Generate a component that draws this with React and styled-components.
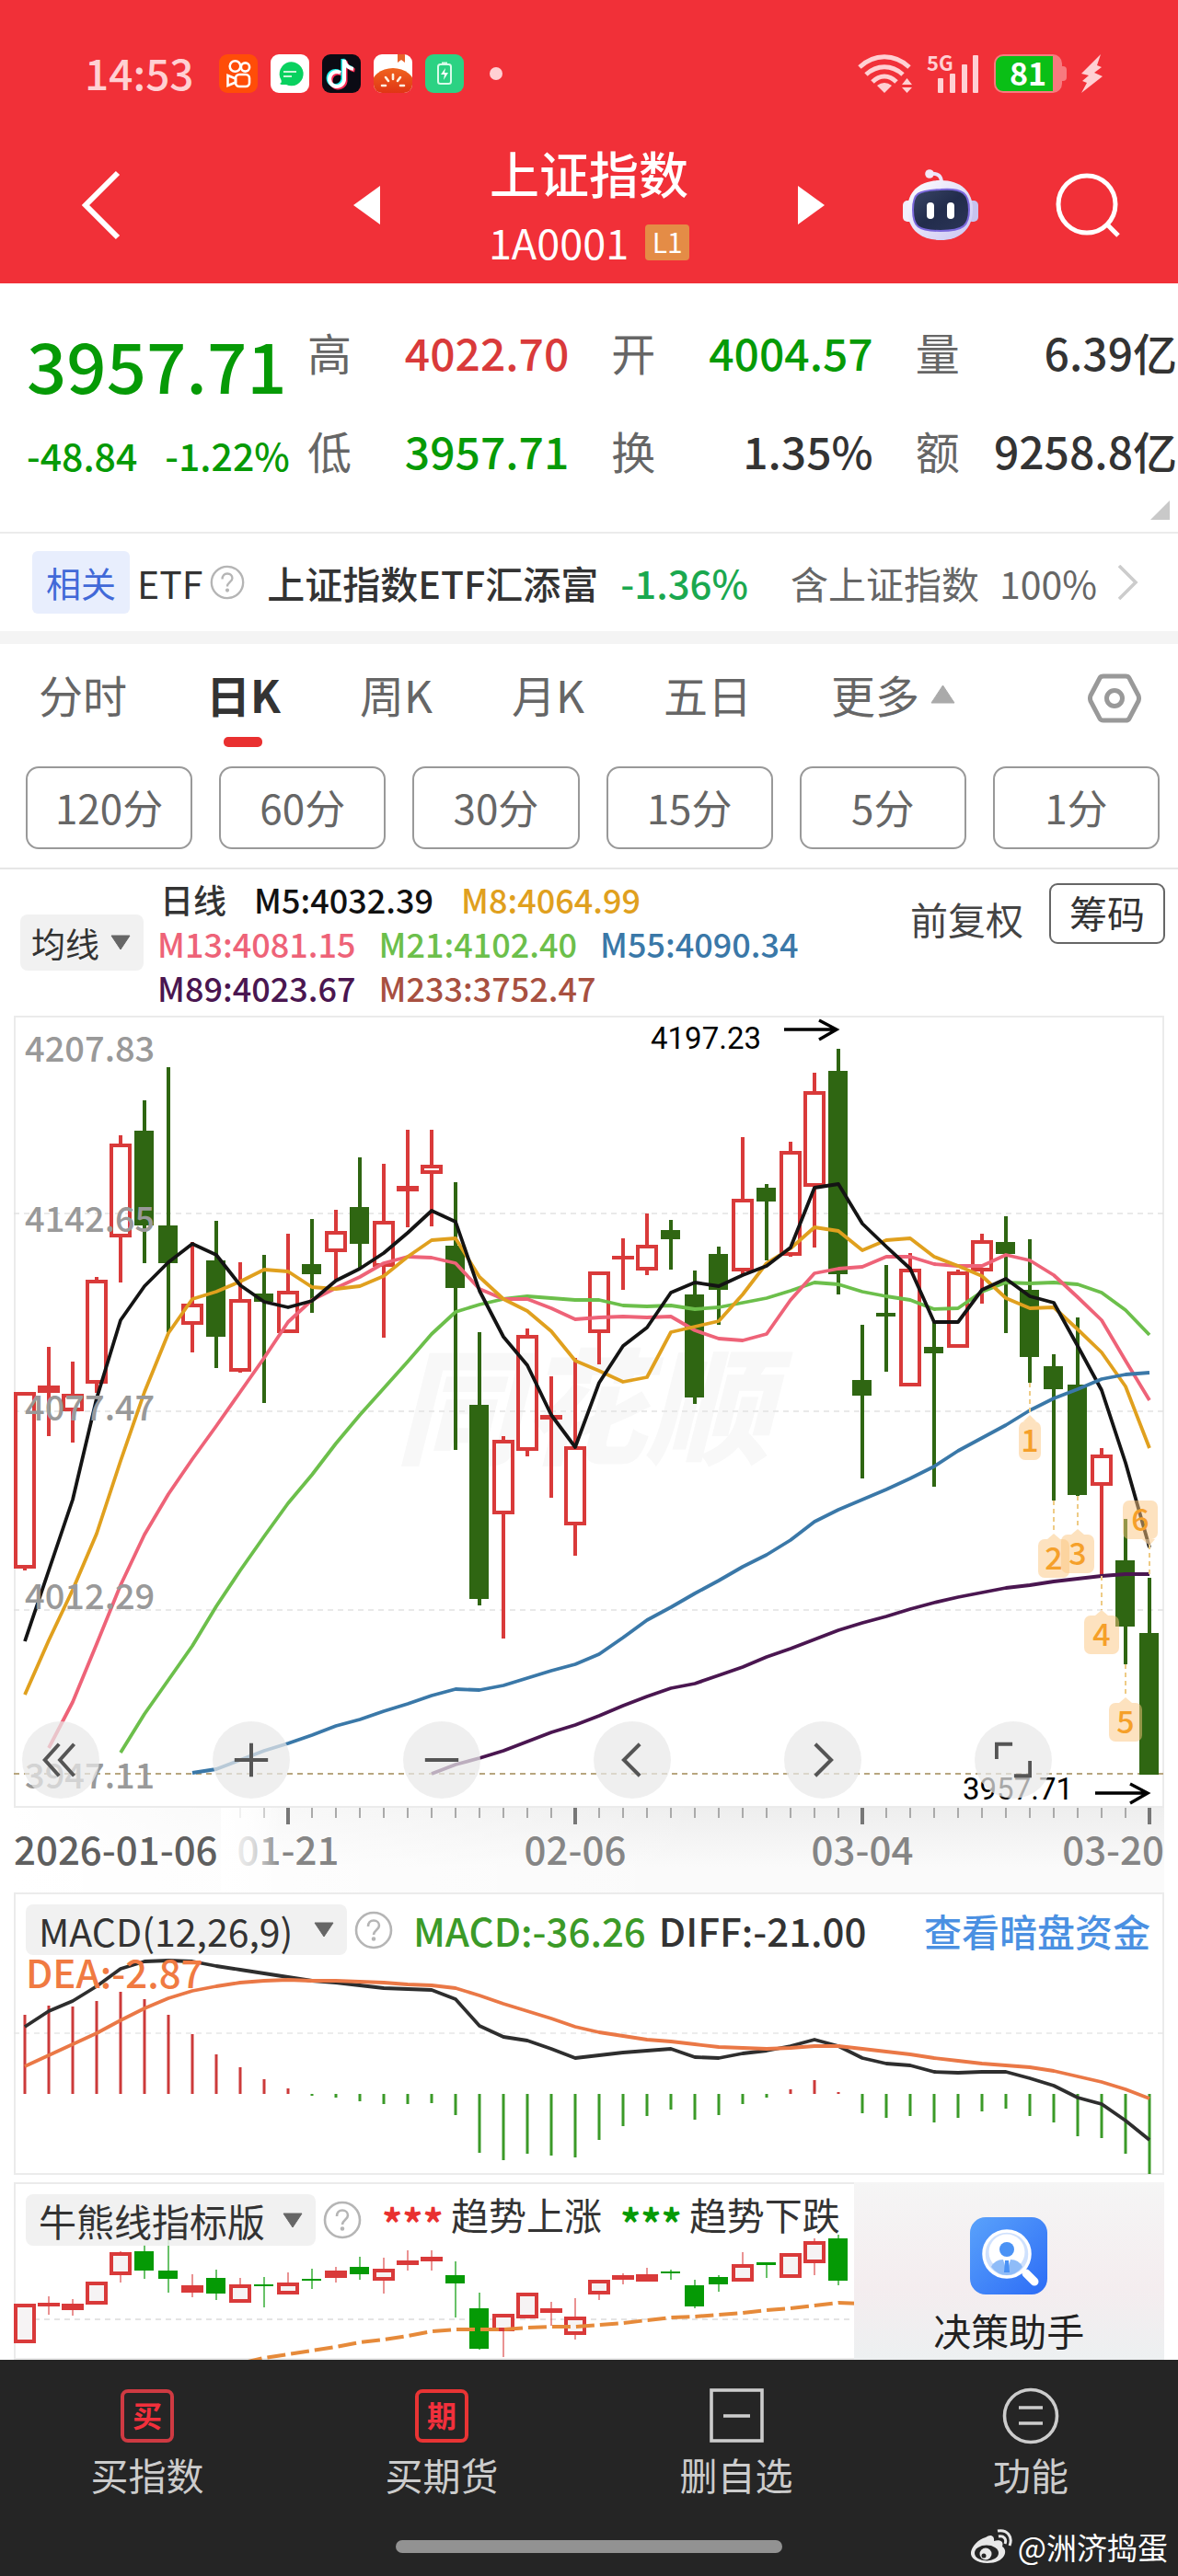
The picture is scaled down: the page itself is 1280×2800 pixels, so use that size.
import React from "react";
import styled, { createGlobalStyle } from "styled-components";

const FONT = '"Noto Sans CJK SC", "Noto Sans", sans-serif';
const RED = "#f13038";
const UP = "#d93a3a";
const GREEN = "#069a06";

const GlobalStyle = createGlobalStyle`
  * { box-sizing: border-box; }
  body { margin: 0; background: #fff; color: #333; font-family: ${FONT}; }
  button, select { margin: 0; padding: 0; border: 0; background: none; color: inherit; font: inherit; cursor: pointer; }
  a { color: inherit; text-decoration: none; }
  svg { display: block; }
  svg text { font-family: ${FONT}; }
  h1, h2, p, dl, dd, dt { margin: 0; font-weight: inherit; font-size: inherit; }
`;

/* ---------- header ---------- */
const Header = styled.header`
  background: ${RED};
  color: #fff;
  padding-bottom: 14px;
`;
const StatusBar = styled.div`
  display: flex;
  align-items: center;
  padding: 56px 82px 0 92px;
  color: #ffd0d3;
  font-size: 46px;
  font-weight: 500;
  line-height: 48px;
`;
const Clock = styled.span`
  padding-bottom: 4px;
  line-height: 44px;
`;
const AppIcons = styled.div`
  display: flex;
  align-items: center;
  gap: 14px;
  margin-left: 27px;
`;
const MoreDot = styled.span`
  width: 14px;
  height: 14px;
  margin-left: 14px;
  border-radius: 50%;
  background: #ffd0d3;
`;
const StatusRight = styled.div`
  display: flex;
  align-items: center;
  gap: 15px;
  margin-left: auto;
`;
const Network = styled.div`
  display: grid;
  grid-template-columns: 58px;
  & > * { grid-area: 1 / 1; }
`;
const NetworkLabel = styled.span`
  align-self: start;
  font-size: 22px;
  font-weight: 700;
  line-height: 16px;
`;
const Battery = styled.div`
  display: flex;
  align-items: center;
  &::after {
    content: "";
    width: 5px;
    height: 16px;
    border-radius: 0 4px 4px 0;
    background: #f77a7f;
  }
`;
const BatteryBody = styled.div`
  width: 74px;
  height: 42px;
  border: 2px solid #f77a7f;
  border-radius: 10px;
  background: linear-gradient(90deg, #0abf16 0 62px, #f77a7f 62px);
  color: #fff;
  font-size: 34px;
  font-weight: 700;
  line-height: 35px;
  text-align: center;
`;
const NavBar = styled.nav`
  display: grid;
  grid-template-columns: 1fr 454px 1fr;
  align-items: center;
  padding-top: 48px;
`;
const NavSide = styled.div`
  display: flex;
  align-items: center;
  justify-content: space-between;
  padding-left: ${(p) => (p.$start ? 88 : 0)}px;
  padding-right: ${(p) => (p.$start ? 0 : 62)}px;
`;
const TitleBlock = styled.div`
  text-align: center;
`;
const Title = styled.h1`
  font-size: 54px;
  font-weight: 500;
  line-height: 72px;
`;
const CodeRow = styled.p`
  display: flex;
  align-items: center;
  justify-content: center;
  gap: 18px;
  margin-top: 8px;
  font-size: 45px;
  line-height: 62px;
`;
const LevelBadge = styled.span`
  width: 48px;
  height: 39px;
  border-radius: 4px;
  background: #e48c46;
  font-size: 30px;
  line-height: 36px;
  text-align: center;
`;

/* ---------- quote ---------- */
const Quote = styled.section`
  position: relative;
  display: grid;
  grid-template-columns: 260px minmax(0, 1fr);
  gap: 45px;
  padding: 44px 1px 59px 29px;
  border-bottom: 2px solid #ebebeb;
`;
const LastPrice = styled.p`
  color: ${GREEN};
  font-size: 76px;
  font-weight: 500;
  line-height: 86px;
`;
const Change = styled.p`
  display: flex;
  gap: 30px;
  margin-top: 36px;
  color: ${GREEN};
  font-size: 41px;
  font-weight: 500;
  line-height: 40px;
  white-space: nowrap;
`;
const Stats = styled.dl`
  display: grid;
  grid-template-columns: repeat(3, 1fr);
  gap: 47px 46px;
`;
const Stat = styled.div`
  display: flex;
  justify-content: space-between;
  font-size: 48px;
  line-height: 60px;
  white-space: nowrap;
  dt { color: #666; }
  dd { color: ${(p) => p.$color || "#333"}; font-weight: 500; }
`;
const Corner = styled.svg`
  position: absolute;
  right: 9px;
  bottom: 13px;
`;

/* ---------- ETF row ---------- */
const EtfRow = styled.section`
  display: flex;
  align-items: center;
  justify-content: space-between;
  padding: 19px 43px 19px 35px;
  border-bottom: 14px solid #f4f4f4;
  font-size: 41px;
  line-height: 68px;
  white-space: nowrap;
`;
const EtfGroup = styled.div`
  display: flex;
  align-items: center;
  gap: ${(p) => p.$gap}px;
  color: ${(p) => p.$color || "inherit"};
`;
const Tag = styled.span`
  padding: 0 15px;
  border-radius: 6px;
  background: #e8eefd;
  color: #4169d8;
  font-size: 38px;
`;
const EtfName = styled.a`
  font-weight: 500;
`;
const EtfPct = styled.span`
  color: #1ba84f;
  font-size: 42px;
  font-weight: 500;
`;

/* ---------- period tabs ---------- */
const Periods = styled.section`
  border-bottom: 2px solid #e6e6e6;
  padding-bottom: 20px;
`;
const TabRow = styled.div`
  display: flex;
  gap: 86px;
  padding: 0 40px 0 42px;
`;
const Tab = styled.button`
  position: relative;
  display: flex;
  align-items: center;
  gap: 12px;
  height: 133px;
  padding: 24px 0 49px;
  color: ${(p) => (p.$active ? "#333" : "#666")};
  font-size: 48px;
  font-weight: ${(p) => (p.$active ? 700 : 400)};
  line-height: 60px;
  &::after {
    content: "";
    display: ${(p) => (p.$active ? "block" : "none")};
    position: absolute;
    left: 50%;
    bottom: 21px;
    width: 42px;
    height: 11px;
    margin-left: -21px;
    border-radius: 5px;
    background: #e93030;
  }
`;
const SettingsButton = styled.button`
  height: 117px;
  margin-left: auto;
`;
const MinuteRow = styled.div`
  display: grid;
  grid-template-columns: repeat(6, 1fr);
  gap: 29px;
  padding: 0 20px 0 28px;
`;
const MinuteButton = styled.button`
  height: 90px;
  border: 2px solid #999;
  border-radius: 14px;
  color: #666;
  font-size: 44px;
  line-height: 60px;
  padding-bottom: 2px;
`;

/* ---------- moving average legend ---------- */
const MaBar = styled.section`
  display: flex;
  align-items: flex-start;
  padding: 8px 14px 7px 22px;
`;
const SelectBox = styled.label`
  position: relative;
  display: flex;
  align-items: center;
  height: ${(p) => p.$height}px;
  margin-top: ${(p) => p.$top || 0}px;
  border-radius: 8px;
  background: rgba(238, 238, 238, 0.85);
  svg { position: absolute; right: 14px; pointer-events: none; }
  select {
    appearance: none;
    padding: 0 ${(p) => p.$right}px 0 ${(p) => p.$left}px;
    color: #333;
    font-size: ${(p) => p.$size}px;
    line-height: 52px;
  }
`;
const MaLines = styled.div`
  margin-left: 15px;
`;
const MaLine = styled.p`
  display: flex;
  gap: ${(p) => p.$gap}px;
  padding-left: ${(p) => p.$left || 0}px;
  font-size: 36px;
  font-weight: 500;
  line-height: 48px;
  white-space: nowrap;
`;
const MaItem = styled.span`
  color: ${(p) => p.$color};
`;
const AdjustButton = styled.button`
  height: 76px;
  margin: 7px 28px 0 auto;
  color: #444;
  font-size: 41px;
`;
const ChipButton = styled.button`
  height: 66px;
  margin-top: 7px;
  padding: 0 20px 4px;
  border: 2px solid #666;
  border-radius: 9px;
  font-size: 41px;
  line-height: 56px;
`;

/* ---------- charts ---------- */
const Panel = styled.section`
  display: grid;
  grid-template-columns: minmax(0, 1fr);
  position: relative;
  margin: 0 15px ${(p) => p.$gap || 0}px;
  box-shadow: inset 0 0 0 2px #ebebeb;
  overflow: hidden;
  & > * { grid-area: 1 / 1; }
`;
const ChartSvg = styled.svg`
  width: 100%;
  height: auto;
`;
const ExtremeLabel = styled.text`
  && { font-family: Roboto, "Liberation Sans", sans-serif; }
  font-size: 33px;
  fill: #000;
`;
const AxisStrip = styled.div`
  margin: 0 15px;
  background:
    linear-gradient(90deg, #fff, rgba(255, 255, 255, 0) 60%),
    linear-gradient(180deg, #eeeeee, #fafafa 70%);
`;
const Controls = styled.div`
  position: absolute;
  left: 9px;
  right: 122px;
  bottom: 10px;
  display: flex;
  justify-content: space-between;
`;
const RoundButton = styled.button`
  display: grid;
  place-items: center;
  width: 84px;
  height: 84px;
  border-radius: 50%;
  background: rgba(233, 233, 233, 0.72);
`;
const IndicatorHead = styled.div`
  z-index: 1;
  align-self: start;
  padding: 13px 15px 0 13px;
  font-size: 42px;
`;
const IndicatorRow = styled.div`
  display: flex;
  align-items: ${(p) => (p.$top ? "flex-start" : "center")};
  white-space: nowrap;
  line-height: 54px;
`;
const HelpButton = styled.button`
  margin: ${(p) => (p.$top ? 7 : 0)}px 22px 0 ${(p) => p.$left}px;
`;
const Reading = styled.span`
  margin-right: 14px;
  color: ${(p) => p.$color};
  font-weight: 500;
`;
const DeaReading = styled.p`
  color: #f07a42;
  font-weight: 500;
  line-height: 36px;
`;
const DarkPoolLink = styled.a`
  margin-left: auto;
  color: #4a90e2;
  font-size: 41px;
  font-weight: 500;
`;
const Trend = styled.span`
  margin-right: 20px;
  font-size: 41px;
  line-height: 42px;
`;
const Stars = styled.span`
  margin-right: 8px;
  color: ${(p) => p.$color};
  font-size: 44px;
  font-weight: 700;
  line-height: 60px;
`;
const Assistant = styled.button`
  z-index: 2;
  justify-self: end;
  display: flex;
  flex-direction: column;
  align-items: center;
  gap: 12px;
  width: 27%;
  padding-top: 38px;
  background: linear-gradient(180deg, #f5f5f5, #f4edef 60%, #edf0f1);
  color: #222;
  font-size: 41px;
  line-height: 52px;
`;

/* ---------- bottom bar ---------- */
const BottomBar = styled.footer`
  background: #252525;
  color: #ccc;
`;
const Actions = styled.nav`
  display: grid;
  grid-template-columns: repeat(4, 1fr);
  padding-top: 30px;
`;
const Action = styled.button`
  display: flex;
  flex-direction: column;
  align-items: center;
  gap: 9px;
  font-size: 41px;
  line-height: 46px;
`;
const GlyphBox = styled.span`
  width: 58px;
  height: 58px;
  margin: 2px;
  border: 4px solid ${(p) => p.$color};
  border-radius: 8px;
  color: #f2303c;
  font-size: 32px;
  font-weight: 700;
  line-height: 46px;
`;
const Footer = styled.div`
  display: grid;
  grid-template-columns: 1fr 420px 1fr;
  align-items: center;
  height: 88px;
  padding-top: 24px;
`;
const HomeBar = styled.span`
  grid-column: 2;
  height: 14px;
  border-radius: 7px;
  background: #929292;
`;
const Credit = styled.span`
  display: flex;
  align-items: center;
  justify-self: end;
  gap: 6px;
  padding-right: 11px;
  color: #fff;
  font-size: 33px;
  line-height: 44px;
  white-space: nowrap;
`;

/* ---------- data: pixel heights from the top of each panel ---------- */
const STEP = 26;
const X0 = 12;
const xAt = (i) => X0 + i * STEP;

// [rising, high, body top, body bottom, low]
const candles = [
  [1, 409, 409, 601, 603], [1, 360, 402, 410, 457], [1, 376, 411, 430, 464], [1, 284, 287, 400, 410],
  [1, 130, 139, 241, 290], [0, 92, 125, 228, 269], [0, 56, 228, 269, 344], [1, 246, 313, 336, 366],
  [0, 223, 266, 349, 383], [1, 268, 308, 387, 388], [0, 260, 302, 311, 421], [1, 237, 299, 345, 345],
  [0, 221, 270, 281, 323], [1, 211, 234, 257, 288], [0, 154, 208, 248, 275], [1, 161, 223, 273, 350],
  [1, 124, 185, 191, 230], [1, 124, 162, 172, 229], [0, 181, 250, 296, 472], [0, 344, 423, 634, 641],
  [1, 457, 461, 542, 677], [1, 340, 347, 473, 479], [1, 392, 434, 439, 524], [1, 372, 468, 554, 587],
  [1, 278, 278, 345, 379], [1, 242, 261, 265, 298], [1, 215, 249, 277, 282], [0, 222, 233, 243, 276],
  [0, 277, 303, 415, 422], [0, 251, 259, 298, 336], [1, 132, 199, 278, 281], [0, 183, 187, 202, 266],
  [1, 137, 147, 261, 262], [1, 62, 82, 186, 252], [0, 36, 60, 281, 303], [0, 336, 396, 413, 503],
  [0, 271, 323, 327, 387], [1, 258, 275, 403, 403], [0, 333, 360, 367, 512], [1, 276, 278, 361, 361],
  [1, 237, 244, 278, 313], [0, 218, 246, 259, 345], [0, 243, 298, 371, 399], [0, 368, 381, 406, 527],
  [0, 328, 401, 521, 522], [1, 470, 477, 511, 609], [0, 547, 592, 664, 705], [0, 611, 671, 825, 825],
];
const averages = [
  { color: "#6cbf4b", from: 4, y: [801, 759, 722, 685, 642, 603, 566, 530, 499, 465, 434, 405, 376, 346, 322, 314, 308, 305, 307, 309, 309, 315, 316, 315, 319, 317, 312, 307, 299, 290, 292, 300, 305, 309, 319, 318, 300, 290, 291, 290, 292, 301, 320, 347] },
  { color: "#ee6378", from: 1, y: [796, 746, 683, 619, 564, 520, 482, 446, 409, 372, 333, 309, 296, 284, 269, 262, 263, 269, 297, 308, 308, 318, 330, 328, 327, 328, 327, 342, 351, 353, 346, 309, 280, 275, 273, 262, 262, 270, 272, 272, 260, 266, 282, 306, 331, 375, 418] },
  { color: "#e0a01e", from: 0, y: [738, 679, 624, 563, 484, 409, 345, 308, 300, 289, 276, 278, 295, 297, 294, 283, 262, 244, 242, 284, 308, 321, 343, 375, 386, 398, 393, 344, 338, 332, 303, 269, 253, 230, 234, 255, 244, 242, 262, 272, 283, 307, 318, 317, 341, 366, 403, 470] },
  { color: "#141414", from: 0, y: [680, 603, 526, 416, 331, 294, 268, 248, 260, 293, 311, 317, 310, 288, 275, 258, 236, 212, 224, 299, 349, 380, 434, 469, 399, 359, 339, 301, 290, 294, 282, 272, 252, 187, 183, 226, 251, 275, 333, 333, 298, 286, 305, 312, 359, 407, 486, 578] },
  { color: "#3a78a8", from: 7, y: [823, 819, 809, 799, 791, 782, 772, 765, 756, 748, 739, 732, 733, 728, 720, 712, 705, 694, 676, 657, 643, 628, 614, 599, 586, 570, 550, 537, 526, 515, 503, 490, 473, 459, 445, 429, 416, 406, 395, 390, 388] },
  { color: "#4a1650", from: 17, y: [824, 814, 807, 799, 789, 779, 771, 761, 750, 740, 731, 726, 717, 708, 697, 688, 678, 668, 660, 653, 645, 638, 632, 627, 622, 619, 615, 612, 609, 607, 607] },
];
const scale = [["4207.83", 50], ["4142.65", 235], ["4077.47", 440], ["4012.29", 645], ["3947.11", 840]];
// [digit, box left, box top, box width, pointer x, dash from, dash to]
const marks = [
  ["1", 1092, 441, 24, 1104, 399, 434], ["2", 1113, 569, 34, 1130, 527, 563], ["3", 1138, 564, 36, 1156, 522, 558],
  ["4", 1163, 652, 38, 1182, 609, 646], ["5", 1190, 747, 36, 1208, 705, 741],
];
const macdBars = [133, 123, 124, 118, 108, 116, 133, 154, 176, 190, 203, 213, 221, 223, 227, 230, 230, 229, 242, 283, 291, 284, 286, 288, 269, 254, 243, 236, 247, 242, 230, 223, 214, 204, 217, 240, 245, 243, 250, 245, 238, 235, 243, 250, 265, 267, 284, 306];
const diffLine = [146, 129, 118, 102, 83, 75, 74, 75, 80, 84, 88, 92, 96, 98, 101, 104, 105, 106, 116, 145, 157, 161, 170, 180, 177, 174, 172, 170, 179, 180, 175, 172, 167, 160, 167, 180, 186, 188, 195, 196, 195, 195, 202, 210, 223, 230, 248, 269];
const deaLine = [189, 177, 165, 153, 139, 126, 115, 107, 102, 98, 96, 95, 96, 96, 97, 98, 100, 101, 104, 112, 121, 129, 137, 146, 152, 156, 160, 162, 165, 168, 169, 170, 169, 167, 167, 170, 173, 176, 180, 183, 186, 188, 190, 194, 200, 206, 214, 224];
const trendCandles = [
  [1, 132, 132, 175, 175], [1, 124, 131, 135, 144], [1, 127, 132, 139, 145], [1, 108, 108, 133, 133], [1, 75, 76, 101, 109],
  [0, 68, 75, 96, 105], [0, 60, 96, 105, 120], [1, 100, 112, 120, 125], [0, 95, 104, 121, 128], [1, 104, 111, 131, 131],
  [0, 103, 111, 113, 136], [1, 98, 109, 122, 122], [0, 94, 105, 107, 116], [1, 92, 96, 104, 109], [0, 81, 92, 100, 106],
  [1, 82, 94, 107, 121], [1, 74, 85, 90, 96], [1, 74, 81, 86, 96], [0, 86, 101, 110, 147], [0, 120, 137, 181, 182],
  [1, 143, 143, 162, 190], [1, 120, 120, 148, 148], [1, 130, 137, 142, 156], [1, 126, 146, 166, 171], [1, 106, 106, 122, 128],
  [1, 99, 101, 106, 111], [1, 93, 100, 108, 108], [0, 95, 97, 99, 106], [0, 106, 112, 135, 137], [0, 101, 103, 111, 119],
  [1, 76, 89, 108, 108], [0, 87, 87, 90, 104], [1, 77, 77, 104, 104], [1, 61, 64, 88, 101], [0, 57, 61, 107, 112],
];
const trendLine = [191, 187, 183, 179, 174, 171, 167, 162, 160, 160, 160, 158, 157, 157, 155, 153, 150, 147, 146, 144, 142, 139, 137, 134, 131, 132];

const points = (ys, from = 0) => ys.map((y, i) => `${xAt(i + from)},${y}`).join(" ");

function Candle({ i, data, up = UP, down = "#2f6612", fill = "none", wick = 4 }) {
  const [rising, high, top, bottom, low] = data;
  const x = xAt(i);
  if (!rising) {
    return (
      <g fill={down}>
        <rect x={x - wick / 2} y={high} width={wick} height={low - high} opacity={wick < 4 ? 0.6 : 1} />
        <rect x={x - 11} y={top} width="21" height={bottom - top} />
      </g>
    );
  }
  const h = bottom - top;
  return (
    <g>
      <g fill={up} opacity={wick < 4 ? 0.55 : 1}>
        <rect x={x - wick / 2} y={high} width={wick} height={top - high} />
        <rect x={x - wick / 2} y={bottom} width={wick} height={low - bottom} />
      </g>
      {h <= 8 ? (
        <rect x={x - 12} y={top} width="24" height={h} fill={up} />
      ) : (
        <rect x={x - 10} y={top + 2} width="20" height={h - 4} fill={fill} stroke={up} strokeWidth="4" />
      )}
    </g>
  );
}

function MainChart() {
  return (
    <ChartSvg viewBox="0 0 1250 861" role="img" aria-label="上证指数日K线">
      <text x="415" y="440" fontSize="136" fontWeight="900" fontStyle="italic" fill="#f8f8f8" dominantBaseline="middle">同花顺</text>
      <g stroke="#e2e2e2" strokeWidth="1.5" strokeDasharray="6 5">
        <path d="M0 215H1250M0 430H1250M0 646H1250" />
      </g>
      <path d="M0 824H1250" stroke="#b8a67f" strokeWidth="2" strokeDasharray="6 5" />
      {candles.map((c, i) => <Candle key={i} i={i} data={c} />)}
      {averages.map((a) => (
        <polyline key={a.color} points={points(a.y, a.from)} fill="none" stroke={a.color} strokeWidth="3.8" strokeLinejoin="round" />
      ))}
      {marks.map(([d, x, y, w, px, from, to]) => (
        <g key={d}>
          <path d={`M${px} ${from}V${to}`} stroke="#eecb85" strokeWidth="2" strokeDasharray="5 4" />
          <path d={`M${px - 7} ${y}L${px} ${to}L${px + 7} ${y}Z`} fill="#fcd6a3" opacity="0.7" />
          <rect x={x} y={y} width={w} height="42" rx="7" fill="#fbc680" opacity="0.5" />
          <text x={px} y={y + 33} fontSize="34" fontWeight="500" fill="#f5a02a" textAnchor="middle">{d}</text>
        </g>
      ))}
      <g>
        <path d="M1234 575V611" stroke="#eecb85" strokeWidth="2" strokeDasharray="5 4" />
        <path d="M1226 569L1234 576L1240 569Z" fill="#fcd6a3" opacity="0.7" />
        <rect x="1205" y="527" width="38" height="42" rx="7" fill="#fbc680" opacity="0.5" />
        <text x="1224" y="560" fontSize="34" fontWeight="500" fill="#f5a02a" textAnchor="middle">6</text>
      </g>
      <g fontSize="38" fontWeight="500" fill="#999">
        {scale.map(([t, y]) => <text key={t} x="12" y={y}>{t}</text>)}
      </g>
      <ExtremeLabel x="692" y="36">4197.23</ExtremeLabel>
      <ExtremeLabel x="1031" y="852">3957.71</ExtremeLabel>
      <path d="M837 15H894M875 5L894 15L875 26M1175 845H1232M1213 835L1232 845L1213 856" fill="none" stroke="#000" strokeWidth="3.4" />
    </ChartSvg>
  );
}

function DateAxis() {
  return (
    <ChartSvg viewBox="0 0 1250 92" role="img" aria-label="日期">
      <defs>
        <linearGradient id="fade">
          <stop offset="0" stopColor="#fff" />
          <stop offset="0.55" stopColor="#fff" stopOpacity="0.7" />
          <stop offset="1" stopColor="#fff" stopOpacity="0" />
        </linearGradient>
      </defs>
      {Array.from({ length: 39 }, (_, k) => k + 9).map((i) => {
        const major = (i - 11) % 12 === 0;
        return <rect key={i} x={xAt(i) - (major ? 2 : 1)} y="0" width={major ? 4 : 2} height={major ? 18 : 11} fill={major ? "#777" : "#aaa"} />;
      })}
      <g fontSize="42" fontWeight="500" fill="#858585" textAnchor="middle">
        <text x="298" y="62">01-21</text>
        <text x="610" y="62">02-06</text>
        <text x="922" y="62">03-04</text>
        <text x="1250" y="62" textAnchor="end">03-20</text>
      </g>
      <rect x="225" width="65" height="92" fill="url(#fade)" />
      <text x="0" y="62" fontSize="42" fontWeight="500" fill="#5f5f5f">2026-01-06</text>
    </ChartSvg>
  );
}

function MacdChart() {
  return (
    <ChartSvg viewBox="0 0 1250 307" role="img" aria-label="MACD">
      <path d="M0 153H1250" stroke="#e6e6e6" strokeWidth="1.5" strokeDasharray="6 5" />
      {macdBars.map((y, i) => (
        <rect key={i} x={xAt(i) - 1.5} y={Math.min(y, 219)} width="3" height={Math.abs(219 - y)} fill={y < 219 ? "#cc3a3a" : "#3b9a28"} />
      ))}
      <g fill="none" strokeWidth="3.8" strokeLinejoin="round">
        <polyline points={points(diffLine)} stroke="#2e2e2e" />
        <polyline points={points(deaLine)} stroke="#ea7846" />
      </g>
    </ChartSvg>
  );
}

function TrendChart() {
  return (
    <ChartSvg viewBox="0 0 1250 193" role="img" aria-label="牛熊线">
      <path d="M0 149H1250" stroke="#dcdcdc" strokeWidth="1.5" strokeDasharray="6 5" />
      {trendCandles.map((c, i) => <Candle key={i} i={i} data={c} down="#059a05" fill="#f6f3f4" wick={2} />)}
      <polyline points={`250,196 ${points(trendLine, 10)}`} fill="none" stroke="#e68a3a" strokeWidth="4" strokeDasharray="20 6" />
    </ChartSvg>
  );
}

/* ---------- small drawings ---------- */
const Down = () => (
  <svg width="22" height="17" viewBox="0 0 22 17"><path d="M1 1H21L11 16Z" fill="#666" stroke="#666" strokeLinejoin="round" /></svg>
);
const Help = ({ size }) => (
  <svg width={size} height={size} viewBox="0 0 42 42" fill="none" stroke="#b5b5b5" strokeWidth="2.6">
    <circle cx="21" cy="21" r="19" />
    <path d="M15 17c0-4 2.500-6.500 6-6.500s6 2.500 6 5.500c0 4.500-6 5-6 10" />
    <circle cx="21" cy="30.500" r="1" fill="#b5b5b5" />
  </svg>
);
const Line = ({ d, size = 44 }) => (
  <svg width={size} height={size} viewBox="0 0 44 44" fill="none" stroke="#555" strokeWidth="4.4"><path d={d} /></svg>
);
const NavTriangle = ({ d }) => (
  <svg width="29" height="42" viewBox="0 0 29 42"><path d={d} fill="#fff" /></svg>
);

function AppGlyphs() {
  const common = { width: 42, height: 42, viewBox: "0 0 42 42" };
  return (
    <AppIcons>
      <svg {...common} fill="none" stroke="#fff" strokeWidth="2.600">
        <rect width="42" height="42" rx="9" fill="#ff4d08" stroke="none" />
        <circle cx="17.500" cy="13" r="5.800" /><circle cx="28.500" cy="14" r="4.600" />
        <rect x="18" y="22" width="15" height="13" rx="4" /><path d="M18 26.500L9.500 23V34L18 30.500Z" />
      </svg>
      <svg {...common}>
        <rect width="42" height="42" rx="9" fill="#fff" />
        <path d="M10 32c2-1 2-2 1.500-4A13 13 0 1 1 17 33c-3 0-5 .5-7-1Z" fill="#08d15f" />
        <path d="M14 19H28M14 24H23" stroke="#c8f5d8" strokeWidth="2" />
      </svg>
      <svg {...common} fill="none" strokeWidth="4">
        <rect width="42" height="42" rx="9" fill="#0b0b14" />
        <path d="M20 20a8 8 0 1 0 4 8V6c1 6 5 9 10 10" stroke="#fe2c55" transform="translate(1.500 1.500)" />
        <path d="M20 20a8 8 0 1 0 4 8V6c1 6 5 9 10 10" stroke="#25f4ee" transform="translate(-1.500 -1)" />
        <path d="M20 20a8 8 0 1 0 4 8V6c1 6 5 9 10 10" stroke="#fff" />
      </svg>
      <svg {...common}>
        <defs>
          <clipPath id="tile"><rect width="42" height="42" rx="9" /></clipPath>
          <linearGradient id="tomato" x2="0" y2="1"><stop stopColor="#f0641e" /><stop offset="1" stopColor="#d81e10" /></linearGradient>
        </defs>
        <g clipPath="url(#tile)">
          <rect width="42" height="42" fill="#fff" />
          <path d="M26 0h8v9l-4-3-4 3Z" fill="#e8622a" />
          <ellipse cx="21" cy="35" rx="24" ry="20" fill="url(#tomato)" />
          <path d="M21 22v5M13 25l3 4M29 25l-3 4M9 34h4M33 34h-4" stroke="#fff3e0" strokeWidth="2.600" strokeLinecap="round" />
        </g>
      </svg>
      <svg {...common}>
        <rect width="42" height="42" rx="9" fill="#2bd283" />
        <rect x="14" y="11" width="14" height="21" rx="2.500" fill="none" stroke="#d8fbe9" strokeWidth="2" />
        <rect x="18" y="8.500" width="6" height="3" fill="#d8fbe9" />
        <path d="M22 15l-5 7h4l-1 6 5-8h-4Z" fill="#fff" />
      </svg>
      <MoreDot />
    </AppIcons>
  );
}

const Robot = () => (
  <svg width="84" height="78" viewBox="0 0 84 78">
    <defs>
      <linearGradient id="shell" x2="1" y2="1"><stop stopColor="#fff" /><stop offset="1" stopColor="#c9c4f2" /></linearGradient>
      <linearGradient id="visor" x2="1" y2="1"><stop stopColor="#3a4666" /><stop offset="0.500" stopColor="#222c4c" /><stop offset="1" stopColor="#2b3557" /></linearGradient>
    </defs>
    <path d="M31 5c8-1 12 2 12 10" fill="none" stroke="#ece4fa" strokeWidth="4" />
    <circle cx="30" cy="5" r="4.800" fill="#f3e8f8" />
    <rect x="1" y="34" width="12" height="23" rx="5" fill="#f1effc" />
    <rect x="71" y="34" width="12" height="23" rx="5" fill="#c7c3ee" />
    <path d="M42 12c22 0 35 12 35 32S64 77 42 77 6 65 6 44 20 12 42 12Z" fill="url(#shell)" />
    <path d="M42 22c25-2 31 5 31 22s-6 23-31 23-30-5-30-23 5-21 30-22Z" fill="url(#visor)" stroke="#7b68dc" strokeWidth="2" />
    <rect x="27" y="36" width="8" height="18" rx="4" fill="#fff" />
    <rect x="49" y="36" width="8" height="18" rx="4" fill="#fff" />
  </svg>
);

const minutes = ["120分", "60分", "30分", "15分", "5分", "1分"];
const controls = [
  ["快退", "M20 3L3 22L20 41M38 3L21 22L38 41"],
  ["放大", "M22 2V42M2 22H42"],
  ["缩小", "M2 22H42"],
  ["左移", "M31 3L12 22L31 41"],
  ["右移", "M13 3L32 22L13 41"],
  ["全屏", "M2 21V3H21M42 23V41H23"],
];

export default function App() {
  return (
    <>
      <GlobalStyle />
      <Header>
        <StatusBar>
          <Clock>14:53</Clock>
          <AppGlyphs />
          <StatusRight>
            <svg width="60" height="42" viewBox="0 0 60 42" fill="none" stroke="#ffd0d3" strokeWidth="5">
              <path d="M2 14C18-1 40-1 56 14M9 22C21 11 37 11 49 22M16 30C24 22 34 22 42 30" />
              <path d="M29 42L21 34Q29 28 37 34Z" fill="#ffd0d3" stroke="none" />
              <path d="M48 33l5.500-7 5.500 7ZM48 36h11l-5.500 6Z" fill="#ffd0d3" stroke="none" />
            </svg>
            <Network>
              <NetworkLabel>5G</NetworkLabel>
              <svg width="58" height="42" viewBox="0 0 58 42" fill="#ffd0d3">
                <rect x="12" y="26" width="6" height="16" rx="1" /><rect x="25" y="21" width="6" height="21" rx="1" />
                <rect x="38" y="11" width="6" height="31" rx="1" /><rect x="50" y="1" width="6" height="41" rx="1" />
              </svg>
            </Network>
            <Battery><BatteryBody>81</BatteryBody></Battery>
            <svg width="24" height="42" viewBox="0 0 24 42"><path d="M22 0L1 21L9 23L2 29L7 31L1 42L24 24L15 20L23 14L18 12Z" fill="#ffd0d3" /></svg>
          </StatusRight>
        </StatusBar>
        <NavBar>
          <NavSide $start>
            <button type="button" aria-label="返回">
              <svg width="44" height="76" viewBox="0 0 44 76" fill="none" stroke="#fff" strokeWidth="6"><path d="M40 3L5 38L40 73" /></svg>
            </button>
            <button type="button" aria-label="上一个"><NavTriangle d="M29 0V42L0 21Z" /></button>
          </NavSide>
          <TitleBlock>
            <Title>上证指数</Title>
            <CodeRow>1A0001 <LevelBadge>L1</LevelBadge></CodeRow>
          </TitleBlock>
          <NavSide>
            <button type="button" aria-label="下一个"><NavTriangle d="M0 0V42L29 21Z" /></button>
            <button type="button" aria-label="助手"><Robot /></button>
            <button type="button" aria-label="搜索">
              <svg width="71" height="70" viewBox="0 0 71 70" fill="none" stroke="#fff" strokeWidth="5"><circle cx="34" cy="34" r="31" /><path d="M56 56L68 68" /></svg>
            </button>
          </NavSide>
        </NavBar>
      </Header>

      <Quote>
        <div>
          <LastPrice>3957.71</LastPrice>
          <Change><span>-48.84</span><span>-1.22%</span></Change>
        </div>
        <Stats>
          <Stat $color={UP}><dt>高</dt><dd>4022.70</dd></Stat>
          <Stat $color={GREEN}><dt>开</dt><dd>4004.57</dd></Stat>
          <Stat><dt>量</dt><dd>6.39亿</dd></Stat>
          <Stat $color={GREEN}><dt>低</dt><dd>3957.71</dd></Stat>
          <Stat><dt>换</dt><dd>1.35%</dd></Stat>
          <Stat><dt>额</dt><dd>9258.8亿</dd></Stat>
        </Stats>
        <Corner width="21" height="21" viewBox="0 0 21 21"><path d="M21 0V21H0Z" fill="#c9c9c9" /></Corner>
      </Quote>

      <EtfRow>
        <EtfGroup $gap={24}>
          <EtfGroup $gap={8}><Tag>相关</Tag>ETF<Help size={38} /></EtfGroup>
          <EtfName href="#etf">上证指数ETF汇添富</EtfName>
          <EtfPct>-1.36%</EtfPct>
        </EtfGroup>
        <EtfGroup $gap={22} $color="#666">
          <span>含上证指数</span>
          <span>100%</span>
          <svg width="23" height="38" viewBox="0 0 23 38" fill="none" stroke="#ccc" strokeWidth="3.600"><path d="M2 1L20 19L2 37" /></svg>
        </EtfGroup>
      </EtfRow>

      <Periods>
        <TabRow>
          <Tab type="button">分时</Tab>
          <Tab type="button" $active>日K</Tab>
          <Tab type="button">周K</Tab>
          <Tab type="button">月K</Tab>
          <Tab type="button">五日</Tab>
          <Tab type="button">更多<svg width="27" height="21" viewBox="0 0 27 21"><path d="M13.500 1L26 20H1Z" fill="#aaa" stroke="#aaa" strokeLinejoin="round" /></svg></Tab>
          <SettingsButton type="button" aria-label="设置">
            <svg width="58" height="54" viewBox="0 0 58 54" fill="none" stroke="#999" strokeWidth="5"><path d="M17 3H41Q44 3 45 5L55 24Q56 27 55 30L45 49Q44 51 41 51H17Q14 51 13 49L3 30Q2 27 3 24L13 5Q14 3 17 3Z" /><circle cx="29" cy="27" r="8.500" /></svg>
          </SettingsButton>
        </TabRow>
        <MinuteRow>
          {minutes.map((m) => <MinuteButton type="button" key={m}>{m}</MinuteButton>)}
        </MinuteRow>
      </Periods>

      <MaBar>
        <SelectBox $height={61} $top={41} $left={12} $right={48} $size={37}>
          <select aria-label="均线"><option>均线</option></select><Down />
        </SelectBox>
        <MaLines>
          <MaLine $gap={30} $left={3}><MaItem $color="#333">日线</MaItem><MaItem $color="#111">M5:4032.39</MaItem><MaItem $color="#e0a01e">M8:4064.99</MaItem></MaLine>
          <MaLine $gap={25}><MaItem $color="#ee6378">M13:4081.15</MaItem><MaItem $color="#6cbf4b">M21:4102.40</MaItem><MaItem $color="#3a78a8">M55:4090.34</MaItem></MaLine>
          <MaLine $gap={25}><MaItem $color="#4a1650">M89:4023.67</MaItem><MaItem $color="#a85040">M233:3752.47</MaItem></MaLine>
        </MaLines>
        <AdjustButton type="button">前复权</AdjustButton>
        <ChipButton type="button">筹码</ChipButton>
      </MaBar>

      <Panel>
        <MainChart />
        <Controls>
          {controls.map(([label, d]) => (
            <RoundButton type="button" key={label} aria-label={label}><Line d={d} size={40} /></RoundButton>
          ))}
        </Controls>
      </Panel>
      <AxisStrip><DateAxis /></AxisStrip>

      <Panel $gap={8}>
        <MacdChart />
        <IndicatorHead>
          <IndicatorRow>
            <SelectBox $height={55} $left={14} $right={58} $size={41}>
              <select aria-label="指标"><option>MACD(12,26,9)</option></select><Down />
            </SelectBox>
            <HelpButton type="button" aria-label="MACD说明" $left={8}><Help size={42} /></HelpButton>
            <Reading $color="#3b9a28">MACD:-36.26</Reading>
            <Reading $color="#333">DIFF:-21.00</Reading>
            <DarkPoolLink href="#funds">查看暗盘资金</DarkPoolLink>
          </IndicatorRow>
          <DeaReading>DEA:-2.87</DeaReading>
        </IndicatorHead>
      </Panel>

      <Panel>
        <TrendChart />
        <IndicatorHead>
          <IndicatorRow $top>
            <SelectBox $height={56} $left={14} $right={55} $size={41}>
              <select aria-label="指标"><option>牛熊线指标版</option></select><Down />
            </SelectBox>
            <HelpButton type="button" aria-label="牛熊线说明" $top $left={8}><Help size={42} /></HelpButton>
            <Stars $color="#e93030">***</Stars><Trend>趋势上涨</Trend>
            <Stars $color={GREEN}>***</Stars><Trend>趋势下跌</Trend>
          </IndicatorRow>
        </IndicatorHead>
        <Assistant type="button">
          <svg width="84" height="84" viewBox="0 0 84 84">
            <defs><linearGradient id="assist" x2="1" y2="1"><stop stopColor="#5aa2fb" /><stop offset="1" stopColor="#2c6cf6" /></linearGradient></defs>
            <rect width="84" height="84" rx="17" fill="url(#assist)" />
            <circle cx="40" cy="40" r="25" fill="#cfe1fd" stroke="#fff" strokeWidth="3.500" />
            <circle cx="40" cy="38" r="19.500" fill="#fff" />
            <circle cx="40" cy="35" r="8" fill="#4a92f5" />
            <path d="M23 54Q27 46 36 46L40 60L44 46Q53 46 57 54Q50 63 40 63T23 54Z" fill="#8fbcf8" />
            <path d="M38 47H42L43 60H37Z" fill="#4a92f5" />
            <path d="M61 61L70 70" stroke="#fff" strokeWidth="9" strokeLinecap="round" />
          </svg>
          决策助手
        </Assistant>
      </Panel>

      <BottomBar>
        <Actions>
          <Action type="button"><GlyphBox $color="#cf3a42">买</GlyphBox>买指数</Action>
          <Action type="button"><GlyphBox $color="#e93434">期</GlyphBox>买期货</Action>
          <Action type="button">
            <svg width="62" height="62" viewBox="0 0 62 62" fill="none" stroke="#ccc" strokeWidth="3.600"><rect x="4" y="3" width="55" height="55" /><path d="M17 31H46" /></svg>
            删自选
          </Action>
          <Action type="button">
            <svg width="62" height="62" viewBox="0 0 62 62" fill="none" stroke="#ccc" strokeWidth="3.600"><circle cx="31" cy="31" r="28.500" /><path d="M18 22H44M18 39H44" /></svg>
            功能
          </Action>
        </Actions>
        <Footer>
          <HomeBar />
          <Credit>
            <svg width="46" height="38" viewBox="0 0 46 38">
              <path d="M17 9C22 5 27 7 26 13C33 11 37 14 35 19C42 23 38 37 19 37C7 37 0 31 1 25C2 19 9 11 17 9Z" fill="#e8e8e8" />
              <ellipse cx="18" cy="26" rx="13" ry="8.500" fill="#252525" />
              <circle cx="17" cy="27" r="6.500" fill="#e8e8e8" /><circle cx="15" cy="29" r="2.500" fill="#252525" />
              <path d="M31 8C37 7 40 11 38 16M30 2C40 0 47 8 43 18" fill="none" stroke="#e8e8e8" strokeWidth="3" />
            </svg>
            @洲济捣蛋
          </Credit>
        </Footer>
      </BottomBar>
    </>
  );
}
